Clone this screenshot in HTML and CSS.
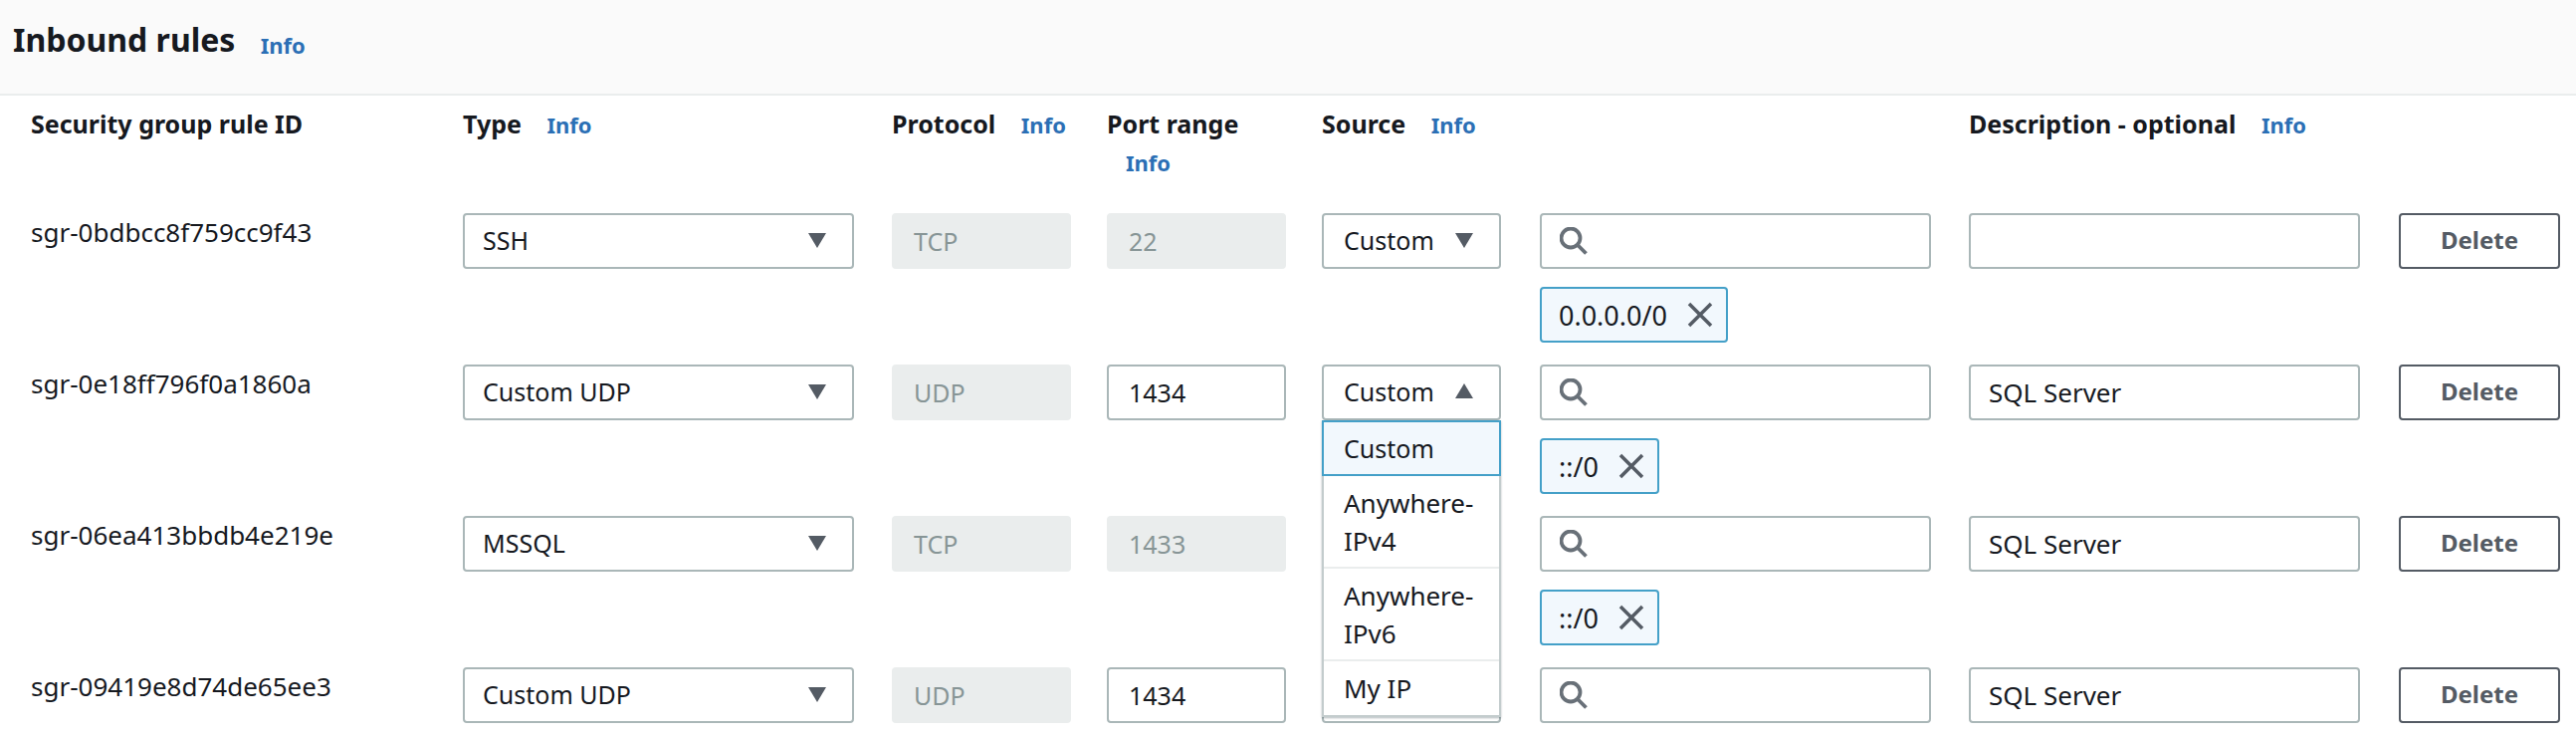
FILE: index.html
```html
<!DOCTYPE html>
<html lang="en">
<head>
  <meta charset="UTF-8">
  <title>Inbound rules</title>
  <link rel="stylesheet" href="styles.css">
</head>
<body>
  <svg class="defs" width="0" height="0">
    <symbol id="caret-down" viewBox="0 0 20 16"><path d="M1 1h18l-9 15z"/></symbol>
    <symbol id="caret-up" viewBox="0 0 20 16"><path d="M1 15h18L10 0z"/></symbol>
    <symbol id="search" viewBox="0 0 28 28"><circle cx="11" cy="11" r="9.5"/><path d="M18 18l8.5 8.5"/></symbol>
    <symbol id="close" viewBox="0 0 26 26"><path d="M2 2l22 22M24 2L2 24"/></symbol>
  </svg>

  <!-- Panel header -->
  <div class="panel-header">
    <h2>Inbound rules <a class="info">Info</a></h2>
  </div>

  <!-- Column headers -->
  <div class="grid head-row">
    <div>Security group rule ID</div>
    <div>Type <a class="info">Info</a></div>
    <div class="w-sm">Protocol <a class="info">Info</a></div>
    <div class="w-sm">Port range <a class="info">Info</a></div>
    <div>Source <a class="info">Info</a></div>
    <div></div>
    <div>Description - optional <a class="info">Info</a></div>
    <div></div>
  </div>

  <!-- Rule 1 -->
  <div class="grid rule-row">
    <div class="rule-id">sgr-0bdbcc8f759cc9f43</div>
    <div class="control select type-select w-lg">SSH <svg class="caret"><use href="#caret-down"/></svg></div>
    <div class="control disabled w-sm">TCP</div>
    <div class="control disabled w-sm">22</div>
    <div class="control select w-sm">Custom <svg class="caret"><use href="#caret-down"/></svg></div>
    <div class="w-lg">
      <div class="control search"><svg class="search-icon"><use href="#search"/></svg></div>
      <div class="token">0.0.0.0/0 <svg class="close-icon"><use href="#close"/></svg></div>
    </div>
    <div class="control description w-lg"></div>
    <button class="delete">Delete</button>
  </div>

  <!-- Rule 2 -->
  <div class="grid rule-row">
    <div class="rule-id">sgr-0e18ff796f0a1860a</div>
    <div class="control select type-select w-lg">Custom UDP <svg class="caret"><use href="#caret-down"/></svg></div>
    <div class="control disabled w-sm">UDP</div>
    <div class="control w-sm">1434</div>
    <div class="source-open w-sm">
      <div class="control select">Custom <svg class="caret"><use href="#caret-up"/></svg></div>
      <ul class="dropdown">
        <li class="selected">Custom</li>
        <li>Anywhere-IPv4</li>
        <li>Anywhere-IPv6</li>
        <li>My IP</li>
      </ul>
    </div>
    <div class="w-lg">
      <div class="control search"><svg class="search-icon"><use href="#search"/></svg></div>
      <div class="token">::/0 <svg class="close-icon"><use href="#close"/></svg></div>
    </div>
    <div class="control description w-lg">SQL Server</div>
    <button class="delete">Delete</button>
  </div>

  <!-- Rule 3, source select sits behind the open dropdown -->
  <div class="grid rule-row">
    <div class="rule-id">sgr-06ea413bbdb4e219e</div>
    <div class="control select type-select w-lg">MSSQL <svg class="caret"><use href="#caret-down"/></svg></div>
    <div class="control disabled w-sm">TCP</div>
    <div class="control disabled w-sm">1433</div>
    <div class="control w-sm"></div>
    <div class="w-lg">
      <div class="control search"><svg class="search-icon"><use href="#search"/></svg></div>
      <div class="token">::/0 <svg class="close-icon"><use href="#close"/></svg></div>
    </div>
    <div class="control description w-lg">SQL Server</div>
    <button class="delete">Delete</button>
  </div>

  <!-- Rule 4 -->
  <div class="grid rule-row">
    <div class="rule-id">sgr-09419e8d74de65ee3</div>
    <div class="control select type-select w-lg">Custom UDP <svg class="caret"><use href="#caret-down"/></svg></div>
    <div class="control disabled w-sm">UDP</div>
    <div class="control w-sm">1434</div>
    <div class="control w-sm"></div>
    <div class="w-lg">
      <div class="control search"><svg class="search-icon"><use href="#search"/></svg></div>
    </div>
    <div class="control description w-lg">SQL Server</div>
    <button class="delete">Delete</button>
  </div>
</body>
</html>
```

FILE: styles.css
```css
/* General Styles */
body {
  margin: 0;
  background: #ffffff;
  color: #16191f;
  font-family: "Noto Sans", sans-serif;
  font-size: 25px;
}

.defs {
  position: absolute;
}

/* Panel header */
.panel-header {
  height: 94px;
  background: #fafafa;
  border-bottom: 2px solid #eaeded;
}

.panel-header h2 {
  margin: 0;
  padding: 18px 0 0 13px;
  font-size: 32px;
  line-height: 44px;
  font-weight: 700;
}

.panel-header .info {
  margin-left: 17px;
  vertical-align: -2px;
}

.info {
  margin-left: 19px;
  color: #2b6fb5;
  font-size: 22px;
  font-weight: 700;
}

/* Rule table */
.grid {
  display: grid;
  grid-template-columns: 434px 431px 216px 216px 219px 431px 432px 162px;
  padding-left: 31px;
}

.head-row {
  height: 118px;
  padding-top: 9px;
  box-sizing: border-box;
  font-weight: 700;
  line-height: 38px;
}

.rule-row {
  margin-bottom: 22px;
  align-items: start;
}

.rule-row:last-child {
  margin-bottom: 0;
}

.rule-id {
  font-size: 26px;
  line-height: 38px;
}

.w-sm {
  width: 180px;
}

.w-lg {
  width: 393px;
}

.control {
  display: flex;
  align-items: center;
  justify-content: space-between;
  height: 56px;
  padding: 0 20px;
  box-sizing: border-box;
  background: #ffffff;
  border: 2px solid #aab7b8;
  border-radius: 4px;
}

.select {
  padding-bottom: 3px;
}

.type-select,
.description {
  padding-left: 18px;
}

.description {
  font-size: 26px;
}

.disabled {
  background: #eaeded;
  border-color: #eaeded;
  color: #879596;
}

.caret {
  width: 20px;
  height: 16px;
  margin-right: 5px;
  fill: #545b64;
}

.search {
  padding-left: 18px;
}

.search-icon {
  width: 28px;
  height: 28px;
  fill: none;
  stroke: #687078;
  stroke-width: 3.8;
}

.token {
  display: inline-flex;
  align-items: center;
  gap: 20px;
  height: 56px;
  margin-top: 18px;
  padding: 0 13px 0 17px;
  box-sizing: border-box;
  background: #f2f8fd;
  border: 2px solid #44a0c8;
  border-radius: 4px;
  font-size: 27px;
}

.close-icon {
  width: 26px;
  height: 26px;
  fill: none;
  stroke: #545b64;
  stroke-width: 3.5;
}

.delete {
  height: 56px;
  padding: 0 0 3px;
  background: #ffffff;
  border: 2px solid #545b64;
  border-radius: 4px;
  color: #545b64;
  font-family: inherit;
  font-size: 24px;
  font-weight: 700;
}

/* Open source dropdown */
.source-open {
  position: relative;
}

.dropdown {
  position: absolute;
  top: 56px;
  left: 0;
  z-index: 2;
  width: 100%;
  margin: 0;
  padding: 0;
  box-sizing: border-box;
  list-style: none;
  background: #ffffff;
  border: 2px solid #c3cccd;
  border-top: 0;
  box-shadow: 0 1px 2px rgba(0, 28, 36, 0.3);
  font-size: 26px;
  line-height: 38px;
}

.dropdown li {
  padding: 8px 20px 7px;
  border-bottom: 2px solid #eaeded;
}

.dropdown li:last-child {
  padding-bottom: 8px;
  border-bottom: 0;
}

.dropdown .selected {
  margin: 0 -2px;
  padding: 7px 20px;
  background: #f2f8fd;
  border: 2px solid #44a0c8;
  font-size: 25px;
}
```
